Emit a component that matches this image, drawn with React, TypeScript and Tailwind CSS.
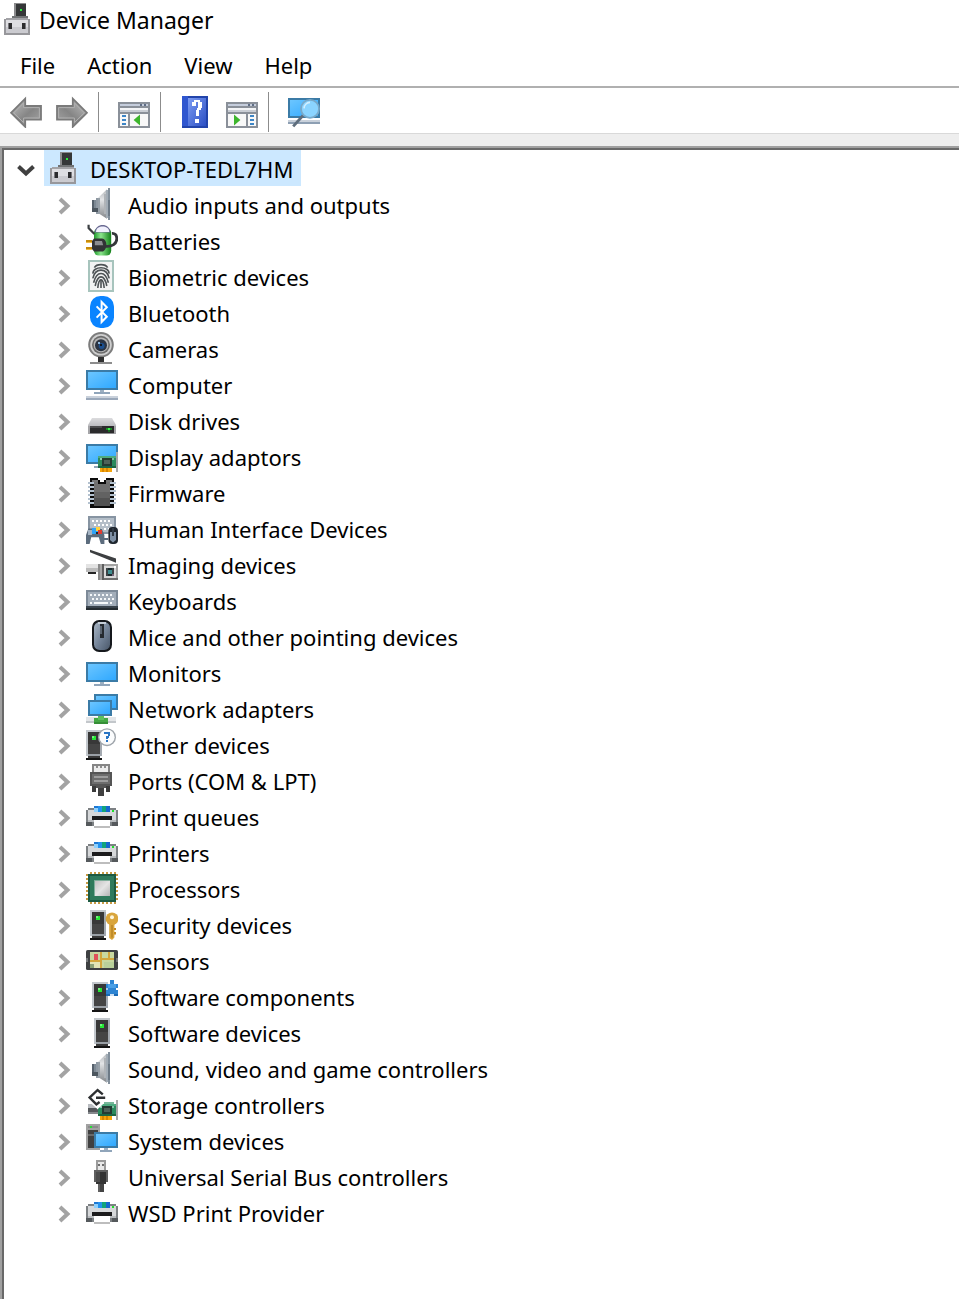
import { useState, type ReactNode } from "react";

type Rect = [fill: string, x: number, y: number, w: number, h: number];

/** Draws a list of filled rectangles on the 16-unit icon grid. */
function Px({ r }: { r: Rect[] }) {
  return (
    <g shapeRendering="crispEdges">
      {r.map(([fill, x, y, w, h], i) => (
        <rect key={i} fill={fill} x={x} y={y} width={w} height={h} />
      ))}
    </g>
  );
}

function Icon({ children }: { children: ReactNode }) {
  return (
    <svg viewBox="0 0 16 16" className="size-8 shrink-0" aria-hidden="true">
      {children}
    </svg>
  );
}

function Gradients() {
  return (
    <svg className="absolute size-0" aria-hidden="true">
      <defs>
        <linearGradient id="screen" x1="0" y1="0" x2="1" y2="1">
          <stop offset="0" stopColor="#6cc6ff" />
          <stop offset="1" stopColor="#2fa8ff" />
        </linearGradient>
        <linearGradient id="arrow" x1="0" y1="0" x2="1" y2="1">
          <stop offset="0" stopColor="#c4c4c4" />
          <stop offset="0.55" stopColor="#858585" />
          <stop offset="1" stopColor="#a8a8a8" />
        </linearGradient>
        <linearGradient id="silver" x1="0" y1="0" x2="1" y2="1">
          <stop offset="0" stopColor="#c2c2c2" />
          <stop offset="0.5" stopColor="#e4e4e4" />
          <stop offset="1" stopColor="#b4b4b4" />
        </linearGradient>
        <linearGradient id="book" x1="0" y1="0" x2="1" y2="1">
          <stop offset="0" stopColor="#7d9cf2" />
          <stop offset="1" stopColor="#2b4fc4" />
        </linearGradient>
        <linearGradient id="battery" x1="0" y1="0" x2="1" y2="0">
          <stop offset="0" stopColor="#1f9a2c" />
          <stop offset="0.4" stopColor="#8be58c" />
          <stop offset="1" stopColor="#128018" />
        </linearGradient>
        <linearGradient id="mouse" x1="0" y1="0" x2="1" y2="1">
          <stop offset="0" stopColor="#a9b6c4" />
          <stop offset="0.5" stopColor="#75859a" />
          <stop offset="1" stopColor="#4a586a" />
        </linearGradient>
        <linearGradient id="lid" x1="0" y1="0" x2="0" y2="1">
          <stop offset="0" stopColor="#dcdcde" />
          <stop offset="1" stopColor="#bcbcc0" />
        </linearGradient>
        <linearGradient id="cone" x1="0" y1="0" x2="0" y2="1">
          <stop offset="0" stopColor="#b4b7ba" />
          <stop offset="0.35" stopColor="#e2e4e6" />
          <stop offset="0.7" stopColor="#aeb1b4" />
          <stop offset="1" stopColor="#85888b" />
        </linearGradient>
      </defs>
    </svg>
  );
}

function Screen({ x, y, w, h }: { x: number; y: number; w: number; h: number }) {
  return (
    <g shapeRendering="crispEdges">
      <rect x={x} y={y} width={w} height={h} fill="#3b7ba6" />
      <rect x={x + 1} y={y + 1} width={w - 2} height={h - 2} fill="url(#screen)" />
    </g>
  );
}

function Tower({ x }: { x: number }) {
  return (
    <Px
      r={[
        ["#c3c8cd", x, 1, 8, 13],
        ["#a3a9b0", x + 7, 2, 1, 12],
        ["#383838", x + 1, 2, 6, 11],
        ["#454545", x + 1, 8, 6, 5],
        ["#24e834", x + 3, 4, 2, 2],
        ["#6ff77a", x + 3, 4, 1, 1],
        ["#9aa0a6", x + 1, 13, 6, 1],
        ["#151515", x, 15, 8, 1],
        ["#3a3a3a", x + 1, 14, 6, 1],
      ]}
    />
  );
}

function Card({ x, y }: { x: number; y: number }) {
  return (
    <Px
      r={[
        ["#a8a8a8", x + 9, y - 2, 1, 10],
        ["#2b8a5e", x, y, 9, 6],
        ["#4eab80", x, y, 9, 1],
        ["#1c6644", x, y + 5, 9, 1],
        ["#8fcbb0", x + 1, y + 1, 1, 1],
        ["#7fc0a2", x + 7, y + 1, 1, 1],
        ["#243b33", x + 2, y + 1, 5, 4],
        ["#4d6259", x + 3, y + 2, 3, 2],
        ["#f6a50b", x + 1, y + 6, 6, 2],
        ["#d98600", x + 2, y + 6, 1, 2],
        ["#d98600", x + 4, y + 6, 1, 2],
      ]}
    />
  );
}

function DeviceIcon() {
  return (
    <Icon>
      <Px
        r={[
          ["#8b8b8d", 6, 0, 6, 7],
          ["#353738", 7, 0.5, 5, 6.5],
          ["#2bf03b", 9, 3, 1, 1],
          ["#707274", 5, 6.5, 8, 1],
          ["#97979b", 1, 8, 13, 8],
          ["#a3a3a7", 2, 7.5, 11, 1],
          ["#dedee2", 2, 8.5, 11, 6.5],
          ["#cbcbd0", 2, 12, 11, 3],
          ["#77777b", 3, 10, 2, 3],
          ["#2c2c2e", 3.5, 10, 1.5, 3],
          ["#77777b", 10, 10, 2, 3],
          ["#2c2c2e", 10, 10, 1.5, 3],
        ]}
      />
    </Icon>
  );
}

function SpeakerIcon() {
  return (
    <Icon>
      <path d="M6 5L10.5 .6V15.4L6 12.5Z" fill="url(#cone)" />
      <Px
        r={[
          ["#56616c", 3, 6, 1, 6],
          ["#7d8994", 4, 6, 1, 6],
          ["#8f99a3", 5, 5, 1, 8],
          ["#4c565f", 3, 10, 3, 2],
          ["#97a0a8", 6, 5, 1, 8],
          ["#b0b4b8", 9, 3, 1, 10],
          ["#a3adb6", 10, 1, 1, 14],
          ["#83909c", 11, 0, 1, 16],
          ["#6d7a86", 11, 6, 1, 8],
        ]}
      />
    </Icon>
  );
}

function BatteryIcon() {
  return (
    <Icon>
      <rect x="4" y="2" width="8.6" height="13.8" rx="2.4" fill="url(#battery)" />
      <path d="M4.4 4.2C4.4 -.8 12.2 -.8 12.2 4.2Z" fill="#6a6a92" />
      <path d="M5 4C5 .4 11.6 .4 11.6 4Z" fill="#f1f1fd" />
      <path d="M1.3 .4V2L4.2 5" fill="none" stroke="#3b3f42" strokeWidth="1.1" />
      <path d="M10 11.2C13 11.4 15.4 9.8 15.4 7.4C15.4 5.4 14.4 4.6 13 4.7" fill="none" stroke="#34363a" strokeWidth="1.4" />
      <path d="M4 7.2H8C9.3 7.2 10.2 8.8 10.2 10.4C10.2 12.2 9.2 13.8 8 13.8H4L3 12.5V8.5Z" fill="#313335" />
      <path d="M4.4 8.5H8L8.6 10.6H4.4Z" fill="#8b8d90" />
      <Px
        r={[
          ["#c78c0c", 0, 8, 3, 1],
          ["#f0be4a", 0, 9, 3, 0.5],
          ["#c78c0c", 0, 11.5, 3, 1],
          ["#f0be4a", 0, 12.5, 3, 0.5],
        ]}
      />
    </Icon>
  );
}

function BiometricIcon() {
  return (
    <Icon>
      <Px r={[["#a7c4bd", 1, 0, 13, 16], ["#f3f4f4", 2, 1, 11, 14]]} />
      <g fill="none" stroke="#4e5356" strokeWidth=".8">
        <path d="M4.2 3.8C5.2 1.8 9.8 1.8 10.8 3.8" />
        <path d="M3.5 6.8C3.3 2.9 11.7 2.9 11.5 6.8" />
        <path d="M3.4 9.2C4.6 3.7 10.4 3.7 11.6 9.2" />
        <path d="M3.8 11.4C5.3 5.2 9.7 5.2 11.2 11.4" />
        <path d="M4.6 13C5.8 6.9 9.2 6.9 10.4 13" />
        <path d="M5.9 14C6.4 8.6 8.6 8.6 9.1 14" />
        <path d="M7.5 9.6V14" />
      </g>
    </Icon>
  );
}

function BluetoothIcon() {
  return (
    <Icon>
      <rect x="2" y="0" width="12" height="16" rx="5.2" fill="#0a84ff" />
      <path d="M5.3 5.2L10.4 10.4L7.8 13V3L10.4 5.6L5.3 10.8" fill="none" stroke="#fff" strokeWidth="1" />
    </Icon>
  );
}

function CameraIcon() {
  return (
    <Icon>
      <circle cx="7.5" cy="6.4" r="6.4" fill="#7c7c7c" />
      <circle cx="7.5" cy="6.4" r="5.4" fill="#cfcfcf" />
      <circle cx="7.5" cy="6.4" r="4.5" fill="#6b6b6b" />
      <circle cx="7.5" cy="6.4" r="3.7" fill="#b5b5b5" />
      <circle cx="7.5" cy="6.6" r="3" fill="#2b3442" />
      <circle cx="7.8" cy="7" r="1.5" fill="#1c4f8e" />
      <Px
        r={[
          ["#8fb8de", 6, 5, 1, 1],
          ["#11151b", 7, 6, 1, 1],
          ["#303030", 6, 12.5, 3, 2.5],
          ["#8d8d8d", 2, 15, 11, 1],
        ]}
      />
    </Icon>
  );
}

function ComputerIcon() {
  return (
    <Icon>
      <Screen x={0} y={1} w={16} h={10} />
      <Px
        r={[
          ["#9db0c2", 7, 11, 2, 1],
          ["#90a5ba", 4, 12, 8, 1],
          ["#c9d1db", 0, 14, 16, 1],
          ["#9aa8ba", 0, 15, 16, 1],
        ]}
      />
    </Icon>
  );
}

function DiskIcon() {
  return (
    <Icon>
      <path d="M3 7H13L15 10.5V11H1V10.5Z" fill="url(#lid)" />
      <Px
        r={[
          ["#a5a5a8", 1, 11, 14, 4],
          ["#2b2b2c", 2, 11, 12, 3.5],
          ["#4c4c4e", 2, 11, 6, 1],
          ["#1d8c27", 10, 12, 3, 1],
          ["#3cf04b", 11, 12, 1, 1],
          ["#176b1f", 11, 13, 1, 1],
          ["#8b8b8e", 2, 14.5, 12, 0.5],
        ]}
      />
    </Icon>
  );
}

function DisplayIcon() {
  return (
    <Icon>
      <Screen x={0} y={2} w={16} h={10} />
      <Px r={[["#8fa5ba", 4, 13, 3, 1]]} />
      <Card x={6} y={8} />
    </Icon>
  );
}

function FirmwareIcon() {
  const pins: Rect[] = [3, 5, 7, 9, 11, 13].flatMap((y): Rect[] => [
    ["#b3c1cf", 1, y, 3, 1],
    ["#b3c1cf", 12, y, 3, 1],
  ]);
  return (
    <Icon>
      <Px
        r={[
          ["#0c0c0c", 2, 1, 12, 15],
          ["#ffffff", 6, 1, 4, 1],
          ["#707070", 4, 3, 8, 12],
          ["#626262", 4, 8, 8, 3],
          ["#525252", 4, 11, 8, 4],
          ["#777777", 3, 2, 3, 1],
          ["#777777", 10, 2, 3, 1],
          ["#0c0c0c", 6, 3, 4, 1],
          ["#ffffff", 7, 2, 2, 1],
          ...pins,
        ]}
      />
    </Icon>
  );
}

function HidIcon() {
  const keys: Rect[] = [4, 6, 8].flatMap((y, i) =>
    [3, 5, 7, 9, 11].map((x): Rect => ["#ffffff", x + (i % 2), y, 1, 1])
  );
  return (
    <Icon>
      <Px r={[["#8794a2", 1, 2, 14, 9], ["#b4bec8", 2, 3, 12, 7], ...keys]} />
      <path d="M1.2 8.3H7.8L9.2 11.5V16H7.4L6.4 12.6H2.6L1.8 16H0V11.5Z" fill="#5c6c7d" />
      <path d="M1 9H3V11.5H1Z" fill="#a4b3c3" />
      <Px
        r={[
          ["#2fa3f6", 3, 8, 3, 3],
          ["#ffd23c", 5, 7.5, 2, 2],
          ["#e03b30", 6, 9, 2, 2],
          ["#1e2833", 5, 10, 1, 1],
        ]}
      />
      <rect x="11.2" y="7.5" width="4.8" height="8.5" rx="2" fill="#1f262e" />
      <path d="M12 10H15V14L13.5 15.2L12 14Z" fill="#7e90a5" />
      <Px r={[["#303a45", 13, 8, 1, 4], ["#5c6c7d", 9, 13, 2, 1]]} />
    </Icon>
  );
}

function ImagingIcon() {
  return (
    <Icon>
      <path d="M2 0.9L15 5.3V7.4L2 2.1Z" fill="#3d3f41" />
      <Px
        r={[
          ["#e3e3e3", 0, 8, 6, 2],
          ["#bcbcbc", 0, 10, 6, 2],
          ["#262626", 1, 12, 4, 1],
          ["#a4a4a4", 6, 8, 10, 8],
          ["#8a8a8a", 6, 8, 1, 8],
          ["#5e5e5e", 8, 8, 1, 8],
          ["#dadada", 9, 9, 6, 6],
          ["#6f6f6f", 9, 15, 7, 1],
          ["#ffffff", 14, 9, 1, 1],
          ["#3d4446", 10, 10, 4, 4],
          ["#1c2b2e", 11, 10, 2, 4],
          ["#3f8d90", 11, 11, 2, 2],
          ["#7a6a80", 13, 13, 1, 1],
        ]}
      />
    </Icon>
  );
}

function KeyboardIcon() {
  const keys: Rect[] = [5, 7, 9].flatMap((y, i) =>
    [2, 4, 6, 8, 10, 12].map((x): Rect => ["#f5f8fa", x + (i % 2), y, 1, 1])
  );
  return (
    <Icon>
      <Px
        r={[
          ["#7d8a98", 0, 3, 16, 8],
          ["#a3aeba", 1, 4, 14, 7],
          ...keys,
          ["#f5f8fa", 5, 9, 6, 1],
          ["#39434c", 0, 11, 16, 2],
          ["#252c31", 0, 12, 16, 1],
        ]}
      />
    </Icon>
  );
}

function MouseIcon() {
  return (
    <Icon>
      <rect x="3" y="0" width="10" height="16" rx="3.6" fill="#15181c" />
      <rect x="4" y="1" width="8" height="14" rx="2.8" fill="url(#mouse)" />
      <Px r={[["#c5ced8", 6, 1, 4, 1], ["#252a30", 7, 2, 2, 7], ["#5a6470", 7, 3, 1, 4]]} />
    </Icon>
  );
}

function MonitorIcon() {
  return (
    <Icon>
      <Screen x={0} y={3} w={16} h={10} />
      <Px r={[["#9db0c2", 7, 13, 2, 1], ["#90a5ba", 4, 14, 8, 1]]} />
    </Icon>
  );
}

function NetworkIcon() {
  return (
    <Icon>
      <Screen x={4} y={1} w={12} h={8} />
      <Screen x={1} y={4} w={12} h={8} />
      <Px
        r={[
          ["#a9b9c8", 6, 12, 2, 1],
          ["#e4e6e8", 0, 12.5, 15, 3],
          ["#c3c7cb", 0, 14.5, 15, 1],
          ["#44a744", 4, 13, 7, 3],
          ["#5fc05e", 6, 12, 3, 2],
          ["#368e37", 4, 15, 7, 1],
        ]}
      />
    </Icon>
  );
}

function OtherIcon() {
  return (
    <Icon>
      <Tower x={0} />
      <circle cx="10.5" cy="4.6" r="4.5" fill="#9fa5ab" />
      <circle cx="10.5" cy="4.6" r="3.8" fill="#fbfcfd" />
      <Px
        r={[
          ["#2a75c4", 9, 2, 3, 1],
          ["#2a75c4", 11, 3, 1, 1],
          ["#2a75c4", 10, 4, 1.5, 1],
          ["#2a75c4", 10, 5, 1, 0.5],
          ["#2a75c4", 10, 6, 1, 1],
        ]}
      />
    </Icon>
  );
}

function PortIcon() {
  return (
    <Icon>
      <Px
        r={[
          ["#858585", 3, 0, 9, 4],
          ["#ececec", 4, 1, 7, 3],
          ["#8c8c8c", 5, 1, 1, 1],
          ["#8c8c8c", 7, 1, 1, 1],
          ["#8c8c8c", 9, 1, 1, 1],
          ["#555555", 2, 4, 11, 7],
          ["#6d6d6d", 3, 5, 9, 5],
          ["#9d9d9d", 4, 6, 7, 1],
          ["#9d9d9d", 4, 8, 7, 1],
          ["#3b3b3b", 3, 11, 2, 3],
          ["#3b3b3b", 10, 11, 2, 3],
          ["#555555", 5, 11, 5, 1],
          ["#404040", 6, 12, 3, 4],
        ]}
      />
    </Icon>
  );
}

function PrinterIcon() {
  return (
    <Icon>
      <Px
        r={[
          ["#7d8184", 0, 4, 16, 9],
          ["#d6d8da", 1, 5, 14, 6],
          ["#b9bcbf", 1, 10, 14, 1],
          ["#ffffff", 0, 4, 1, 1],
          ["#ffffff", 15, 4, 1, 1],
          ["#55595c", 0, 11, 3, 2],
          ["#55595c", 13, 11, 3, 2],
          ["#8fd0fb", 4, 3, 8, 3],
          ["#1c78d4", 4, 3, 2, 1],
          ["#2492ee", 6, 3, 2, 3],
          ["#12a57a", 8, 3, 2, 3],
          ["#1668cf", 10, 3, 2, 3],
          ["#1fe02a", 13, 5, 1, 1],
          ["#1c1c1d", 3, 8, 10, 2],
          ["#ffffff", 4, 10, 8, 3],
          ["#bdbdbd", 4, 13, 8, 1],
        ]}
      />
    </Icon>
  );
}

function ProcessorIcon() {
  const pins = [1, 3, 5, 7, 9, 11, 13].flatMap((p): Rect[] => [
    ["#c79a45", p + 1, 0, 1, 16],
    ["#c79a45", 0, p, 16, 1],
  ]);
  return (
    <Icon>
      <Px
        r={[
          ...pins,
          ["#1c5a41", 1, 1, 14, 14],
          ["#2f7a5b", 2, 2, 12, 12],
          ["#7fae9b", 4, 4, 8, 8],
        ]}
      />
      <rect x="4.5" y="4.5" width="7.5" height="7.5" fill="url(#silver)" />
    </Icon>
  );
}

function SecurityIcon() {
  return (
    <Icon>
      <Tower x={2} />
      <circle cx="13" cy="5.4" r="3.2" fill="#d9a53c" />
      <path d="M11.6 8H14.2V14.8L13 16L11.6 15Z" fill="#d9a53c" />
      <path d="M14 10H15V11H14ZM14 12H15V13.2H14Z" fill="#c48a22" />
      <circle cx="13" cy="4.6" r="1" fill="#fff6dc" />
      <path d="M13 8.5V14.8" stroke="#a8751a" strokeWidth=".5" />
    </Icon>
  );
}

function SensorsIcon() {
  return (
    <Icon>
      <rect x="0" y="3" width="16" height="10" rx=".8" fill="#3e4042" />
      <Px
        r={[
          ["#c8d8a0", 2, 4, 12, 8],
          ["#e2e5b4", 2, 8, 5, 4],
          ["#b9d09a", 9, 9, 5, 3],
          ["#d3a63c", 7, 4, 1, 8],
          ["#d3a63c", 2, 8, 5, 1],
          ["#d3a63c", 8, 7, 6, 1],
          ["#d3a63c", 11, 4, 1, 3],
          ["#e0525a", 4, 5, 2, 3],
          ["#8ba276", 2, 10, 2, 2],
          ["#75787a", 0, 7, 1, 2],
          ["#75787a", 15, 7, 1, 2],
        ]}
      />
    </Icon>
  );
}

function ComponentIcon() {
  return (
    <Icon>
      <Tower x={3} />
      <Px
        r={[
          ["#2d84d2", 10, 2, 6, 6],
          ["#2d84d2", 12, 0, 2, 2],
          ["#4ba0e6", 11, 2, 4, 2],
          ["#ffffff", 15, 4, 1, 1],
          ["#a6cbed", 10, 4, 1, 1],
          ["#1c6ab4", 10, 7, 6, 1],
          ["#cfe1f2", 12, 7, 2, 1],
        ]}
      />
    </Icon>
  );
}

function SoftwareIcon() {
  return (
    <Icon>
      <Tower x={4} />
    </Icon>
  );
}

function StorageIcon() {
  return (
    <Icon>
      <Px r={[["#b9bcc0", 1, 8, 7, 2], ["#55585c", 1, 10, 6, 3], ["#86898d", 1, 12, 5, 1]]} />
      <path d="M8.5 3.4L5.8 1L1.6 5.2L5.8 9L7 7.4" fill="none" stroke="#fff" strokeWidth="2.4" />
      <Card x={6} y={8} />
      <path d="M5.8 7.8H8.8L5.8 10.6Z" fill="#fff" />
      <path d="M8.4 3.2L5.8 1L1.8 4.8L5.2 8.2L6.8 7M5 4.9H9.6" fill="none" stroke="#2e3032" strokeWidth="1.2" />
      <Px r={[["#78b79a", 9, 7, 5, 1]]} />
    </Icon>
  );
}

function SystemIcon() {
  return (
    <Icon>
      <Px
        r={[
          ["#a2a2a2", 0, 0, 7, 13],
          ["#404040", 1, 3, 5, 9],
          ["#8b8b8b", 1, 1, 5, 1],
          ["#27dc35", 2, 1, 1, 1],
          ["#6a6a6a", 1, 5, 5, 1],
        ]}
      />
      <Screen x={4} y={4} w={12} h={8} />
      <Px r={[["#9db0c2", 9, 12, 2, 1], ["#90a5ba", 7, 13, 6, 1]]} />
    </Icon>
  );
}

function UsbIcon() {
  return (
    <Icon>
      <Px
        r={[
          ["#9b9b9b", 5, 0, 5, 5],
          ["#e8e8e8", 6, 1, 3, 4],
          ["#6f6f6f", 6, 2, 1, 1],
          ["#6f6f6f", 8, 2, 1, 1],
          ["#606060", 4, 5, 7, 6],
          ["#343434", 5, 6, 5, 6],
          ["#4c4c4c", 5, 6, 2, 5],
          ["#606060", 6, 12, 3, 4],
          ["#444444", 7, 12, 2, 4],
        ]}
      />
    </Icon>
  );
}

function ArrowIcon({ forward = false }: { forward?: boolean }) {
  return (
    <Icon>
      <g transform={forward ? "matrix(-1 0 0 1 16 0)" : undefined}>
        <path d="M.5 8.4L7.6 1.3V5H15.5V11.8H7.6V15.4Z" fill="url(#arrow)" stroke="#7a7a7a" strokeWidth=".9" />
        <path d="M1.9 8.4L6.8 3.5V5.8H14.7V11H6.8V13.3Z" fill="none" stroke="#b0b0b0" strokeWidth=".5" />
      </g>
    </Icon>
  );
}

function PaneIcon({ right = false }: { right?: boolean }) {
  const nav = right ? 12 : 2;
  return (
    <Icon>
      <Px
        r={[
          ["#8a9099", 0, 3, 16, 13],
          ["#c5cddc", 1, 4, 10, 1],
          ["#5f6d85", 11, 4, 1, 1],
          ["#c5cddc", 12, 4, 1, 1],
          ["#5f6d85", 13, 4, 1, 1],
          ["#c5cddc", 14, 4, 1, 1],
          ["#f3f4f6", 1, 6, 14, 1],
          ["#c9cdd4", 1, 7, 14, 1],
          ["#8a9099", 1, 8, 14, 1],
          ["#f8f8f8", 1, 9, 14, 6],
          ["#8a9099", right ? 10 : 5, 8, 1, 8],
          ["#3d85c6", nav, 9.5, 2, 1],
          ["#3d85c6", nav, 11.5, 2, 1],
          ["#3d85c6", nav, 13.5, 2, 1],
        ]}
      />
      <path d={right ? "M4 9.3V14.7L7.2 12Z" : "M11 9.3V14.7L7.8 12Z"} fill="#3db52c" />
    </Icon>
  );
}

function HelpIcon() {
  return (
    <Icon>
      <Px r={[["#2244ab", 1, 0, 13, 16], ["#2f56cf", 1, 0, 3, 15]]} />
      <rect x="4" y="1" width="9" height="14" fill="url(#book)" />
      <Px
        r={[
          ["#ffffff", 7, 2, 3, 1],
          ["#ffffff", 6, 3, 2, 2],
          ["#ffffff", 9, 3, 2, 3],
          ["#ffffff", 8.5, 6, 2, 1],
          ["#ffffff", 8, 7, 1.5, 3],
          ["#ffffff", 7.5, 11.5, 2, 2],
        ]}
      />
    </Icon>
  );
}

function ScanIcon() {
  return (
    <Icon>
      <Screen x={0} y={1} w={16} h={10} />
      <Px r={[["#c9d1db", 0, 12, 16, 1], ["#8d9fb3", 0, 13, 16, 1]]} />
      <path d="M7.6 9.6L2.6 15.2" stroke="#5e6d7c" strokeWidth="1.4" />
      <circle cx="11" cy="6.4" r="4.5" fill="#8ad4ff" stroke="#78a9c9" strokeWidth=".9" />
      <path d="M8 6.2A3.2 3.2 0 0 1 11 3.2" fill="none" stroke="#d2efff" strokeWidth=".8" />
    </Icon>
  );
}

const CATEGORIES: [label: string, icon: () => ReactNode][] = [
  ["Audio inputs and outputs", SpeakerIcon],
  ["Batteries", BatteryIcon],
  ["Biometric devices", BiometricIcon],
  ["Bluetooth", BluetoothIcon],
  ["Cameras", CameraIcon],
  ["Computer", ComputerIcon],
  ["Disk drives", DiskIcon],
  ["Display adaptors", DisplayIcon],
  ["Firmware", FirmwareIcon],
  ["Human Interface Devices", HidIcon],
  ["Imaging devices", ImagingIcon],
  ["Keyboards", KeyboardIcon],
  ["Mice and other pointing devices", MouseIcon],
  ["Monitors", MonitorIcon],
  ["Network adapters", NetworkIcon],
  ["Other devices", OtherIcon],
  ["Ports (COM & LPT)", PortIcon],
  ["Print queues", PrinterIcon],
  ["Printers", PrinterIcon],
  ["Processors", ProcessorIcon],
  ["Security devices", SecurityIcon],
  ["Sensors", SensorsIcon],
  ["Software components", ComponentIcon],
  ["Software devices", SoftwareIcon],
  ["Sound, video and game controllers", SpeakerIcon],
  ["Storage controllers", StorageIcon],
  ["System devices", SystemIcon],
  ["Universal Serial Bus controllers", UsbIcon],
  ["WSD Print Provider", PrinterIcon],
];

function Chevron({ open }: { open: boolean }) {
  return (
    <svg viewBox="0 0 20 20" className="size-5" fill="none" strokeWidth="4" aria-hidden="true">
      {open ? <path d="M2.5 6.5L10 13.5L17.5 6.5" stroke="#404040" /> : <path d="M6 3L13.5 10L6 17" stroke="#a3a3a3" />}
    </svg>
  );
}

function Separator() {
  return <div className="mr-[19px] ml-2.5 h-10 w-px bg-[#8c8c8c]" />;
}

export default function App() {
  const [open, setOpen] = useState(true);
  const [selected, setSelected] = useState("DESKTOP-TEDL7HM");
  const mark = (label: string) => (selected === label ? "bg-[#cce8ff]" : "");

  return (
    <div className="flex min-h-screen flex-col bg-white font-['Noto_Sans',sans-serif] text-[22px] leading-8 text-black">
      <Gradients />
      <header className="flex h-[38px] items-center gap-[5px] pl-0.5">
        <DeviceIcon />
        <h1 className="pt-0.5 text-[23px]">Device Manager</h1>
      </header>

      <nav className="flex h-12 items-center gap-8 pt-1.5 pl-5">
        <button type="button">File</button>
        <button type="button">Action</button>
        <button type="button">View</button>
        <button type="button">Help</button>
      </nav>

      <div className="flex h-12 items-center border-t-2 border-b border-t-[#b0b0b0] border-b-[#d9d9d9] pt-0.5 pl-2.5">
        <button type="button" aria-label="Back" className="mr-3.5"><ArrowIcon /></button>
        <button type="button" aria-label="Forward"><ArrowIcon forward /></button>
        <Separator />
        <button type="button" aria-label="Show console tree"><PaneIcon /></button>
        <Separator />
        <button type="button" aria-label="Help topics" className="mr-3.5"><HelpIcon /></button>
        <button type="button" aria-label="Show action pane"><PaneIcon right /></button>
        <Separator />
        <button type="button" aria-label="Scan for hardware changes"><ScanIcon /></button>
      </div>
      <div className="h-3 bg-[#eeeeee]" />

      <main className="flex grow flex-col border-t-2 border-l-2 border-[#a0a0a0]">
        <div className="grow border-t-2 border-l-2 border-[#696969]">
          <ul role="tree" aria-label="Devices">
            <li role="treeitem" aria-expanded={open}>
              <div className="flex h-9 items-center pl-3">
                <button type="button" aria-label="Toggle devices" className="mr-2 pt-1" onClick={() => setOpen(!open)}>
                  <Chevron open={open} />
                </button>
                <button
                  type="button"
                  className={`flex h-9 items-center gap-2.5 pr-2 pl-1 ${mark("DESKTOP-TEDL7HM")}`}
                  onClick={() => setSelected("DESKTOP-TEDL7HM")}
                >
                  <DeviceIcon />
                  <span className="pt-0.5">DESKTOP-TEDL7HM</span>
                </button>
              </div>
              {open && (
                <ul role="group">
                  {CATEGORIES.map(([label, CategoryIcon]) => (
                    <li key={label} role="treeitem" className="flex h-9 items-center pl-[50px]">
                      <button type="button" aria-label={`Expand ${label}`} className="mr-3 pt-1">
                        <Chevron open={false} />
                      </button>
                      <button
                        type="button"
                        className={`flex h-9 items-center gap-2.5 pr-2 ${mark(label)}`}
                        onClick={() => setSelected(label)}
                      >
                        <CategoryIcon />
                        <span className="pt-0.5">{label}</span>
                      </button>
                    </li>
                  ))}
                </ul>
              )}
            </li>
          </ul>
        </div>
      </main>
    </div>
  );
}
